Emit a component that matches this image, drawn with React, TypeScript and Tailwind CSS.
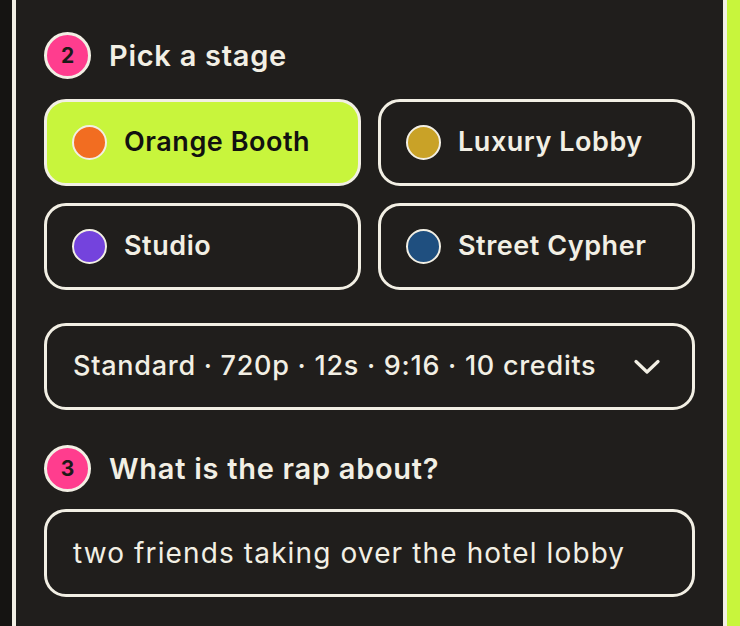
import React from 'react';

const stages = [
  { name: 'Orange Booth', color: 'bg-[#f26d21]', active: true },
  { name: 'Luxury Lobby', color: 'bg-[#c9a227]', active: false },
  { name: 'Studio', color: 'bg-[#7443dd]', active: false },
  { name: 'Street Cypher', color: 'bg-[#1f4f7f]', active: false },
];

const StepBadge = ({ n }: { n: number }) => (
  <div className="w-[47px] h-[47px] rounded-full bg-[#ff3d8e] border-[3px] border-[#f2efe4] flex items-center justify-center text-[21px] font-bold text-[#1b1a18] shrink-0">
    {n}
  </div>
);

const App = () => {
  return (
    <div
      className="w-[740px] h-[626px] flex bg-[#c8f53c] overflow-hidden"
      style={{ fontFamily: 'Inter, "Noto Sans", sans-serif' }}
    >
      {/* page behind the panel */}
      <div className="w-[727px] h-full bg-[#151412] pl-[12px]">
        <div className="h-full border-x-[4px] border-[#f2efe4] bg-[#201e1c] px-[28px] pt-[32px]">
          {/* step 2 */}
          <div className="flex items-center gap-[18px]">
            <StepBadge n={2} />
            <h2 className="text-[29px] font-semibold text-[#f2efe4] tracking-[0.025em]">Pick a stage</h2>
          </div>

          <div className="grid grid-cols-2 gap-x-[17px] gap-y-[17px] mt-[20px]">
            {stages.map((s) => (
              <button
                key={s.name}
                className={
                  'h-[87px] rounded-[22px] border-[3px] border-[#f2efe4] flex items-center gap-[17px] px-[25px] ' +
                  (s.active ? 'bg-[#c8f53c] text-[#121110]' : 'bg-[#201e1c] text-[#f2efe4]')
                }
              >
                <span className={'w-[35px] h-[35px] rounded-full border-[2px] border-[#f2efe4] shrink-0 ' + s.color} />
                <span className="text-[27px] font-semibold tracking-[0.02em]">{s.name}</span>
              </button>
            ))}
          </div>

          {/* quality select */}
          <div className="mt-[33px] h-[87px] rounded-[22px] border-[3px] border-[#f2efe4] flex items-center justify-between pl-[26px] pr-[32px] text-[#f2efe4]">
            <span className="text-[27px] font-medium tracking-[0.027em]">Standard · 720p · 12s · 9:16 · 10 credits</span>
            <svg width="26" height="16" viewBox="0 0 26 16" fill="none">
              <path d="M2 2.5 L13 13 L24 2.5" stroke="#f2efe4" strokeWidth="3.2" strokeLinecap="round" strokeLinejoin="round" />
            </svg>
          </div>

          {/* step 3 */}
          <div className="flex items-center gap-[18px] mt-[35px]">
            <StepBadge n={3} />
            <h2 className="text-[29px] font-semibold text-[#f2efe4] tracking-[0.025em]">What is the rap about?</h2>
          </div>

          <div className="mt-[17px] h-[88px] rounded-[22px] border-[3px] border-[#f2efe4] flex items-center px-[26px]">
            <span className="text-[28px] text-[#f2efe4] tracking-[0.04em]">two friends taking over the hotel lobby</span>
          </div>
        </div>
      </div>
    </div>
  );
};

export default App;
